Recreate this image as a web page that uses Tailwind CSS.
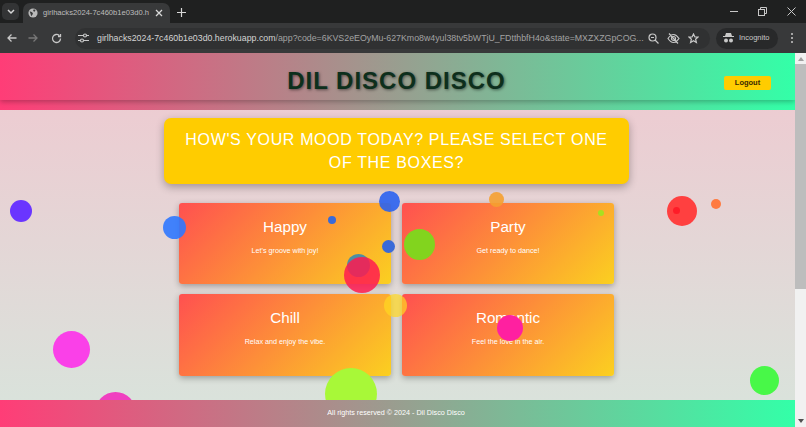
<!DOCTYPE html>
<html lang="en">
<head>
  <meta charset="UTF-8" />
  <title>Dil Disco Disco</title>
  <script src="https://cdn.jsdelivr.net/npm/@tailwindcss/browser@4"></script>
</head>
<body class="w-[806px] h-[427px] overflow-hidden font-['Liberation_Sans',Arial,sans-serif] bg-[#1f2020]">
  <!-- browser chrome -->
  <div class="h-[23px] flex items-end bg-[#1f2020] text-[#c7c7c7]">
    <div class="w-[17px] h-[17px] ml-[2px] mb-[3px] rounded-[5px] bg-[#333435] flex items-center justify-center">
      <svg width="8" height="6" viewBox="0 0 8 6" fill="none" stroke="#d5d5d5" stroke-width="1.5"><path d="M1 1l3 3 3-3"/></svg>
    </div>
    <div class="w-[147px] h-[20px] ml-[4px] rounded-t-[7px] bg-[#38393a] flex items-center pl-[5px] pr-[7px] gap-[5px]">
      <svg width="10" height="10" viewBox="0 0 12 12" fill="#b9b9b9"><circle cx="6" cy="6" r="5.5"/><path d="M2 4l3 1 1 2-2 3zM7 1.500l2 1-1 2-2-1z" fill="#38393a"/></svg>
      <span class="text-[7.600px] leading-none text-[#bdbdbd] whitespace-nowrap flex-1">girlhacks2024-7c460b1e03d0.h</span>
      <svg width="8" height="8" viewBox="0 0 8 8" stroke="#d8d8d8" stroke-width="1.3"><path d="M1 1l6 6M7 1l-6 6"/></svg>
    </div>
    <svg class="ml-[7px] mb-[6px]" width="9" height="9" viewBox="0 0 9 9" stroke="#d8d8d8" stroke-width="1.2"><path d="M4.500 0v9M0 4.500h9"/></svg>
    <div class="ml-auto flex items-center mb-[7px] mr-[10.500px] gap-[20px]">
      <div class="w-[8px] h-[1px] bg-[#c8c8c8]"></div>
      <svg width="9" height="9" viewBox="0 0 9 9" fill="none" stroke="#c8c8c8"><rect x="0.5" y="2.5" width="6" height="6"/><path d="M2.500 2.500V.5h6v6H6.500"/></svg>
      <svg width="9" height="9" viewBox="0 0 9 9" stroke="#c8c8c8"><path d="M.5.500l8 8M8.500.500l-8 8"/></svg>
    </div>
  </div>
  <div class="h-[30px] flex items-center bg-[#38393a]">
    <svg class="ml-[7px]" width="10" height="10" viewBox="0 0 10 10" fill="none" stroke="#c8c8c8" stroke-width="1.3"><path d="M9.500 5H1M4.500 1.500L1 5l3.500 3.500"/></svg>
    <svg class="ml-[11px]" width="10" height="10" viewBox="0 0 10 10" fill="none" stroke="#777" stroke-width="1.3"><path d="M.5 5H9M5.500 1.500L9 5 5.500 8.500"/></svg>
    <svg class="ml-[13px]" width="11" height="11" viewBox="0 0 11 11" fill="none" stroke="#c8c8c8" stroke-width="1.3"><path d="M9.500 5.500a4 4 0 1 1-1.200-2.900M9.500 1v2.500H7"/></svg>
    <div class="ml-[13px] w-[635px] h-[21px] rounded-full bg-[#303132] flex items-center pl-[3px]">
      <svg width="11" height="10" viewBox="0 0 11 10" fill="none" stroke="#c8c8c8" stroke-width="1.200"><path d="M0 2.500h5M9 2.500h2M0 7.500h2M6 7.500h5"/><circle cx="7" cy="2.500" r="1.500"/><circle cx="4" cy="7.500" r="1.500"/></svg>
      <span class="ml-[8px] w-[539px] text-[8.800px] leading-[12px] text-[#d4d4d4] whitespace-nowrap">girlhacks2024-7c460b1e03d0.herokuapp.com<span class="text-[#a3a3a3]">/app?code=6KVS2eEOyMu-627Kmo8w4yul38tv5bWTjU_FDtthbfH4o&amp;state=MXZXZGpCOG...</span></span>
      <svg class="ml-[12px]" width="11" height="11" viewBox="0 0 11 11" fill="none" stroke="#c8c8c8" stroke-width="1.200"><circle cx="4.500" cy="4.500" r="3.500"/><path d="M7 7l3.500 3.500M3 4.500h3"/></svg>
      <svg class="ml-[8px]" width="13" height="11" viewBox="0 0 13 11" fill="none" stroke="#c8c8c8" stroke-width="1.200"><path d="M1 5.500C3 2.500 5 1.500 6.500 1.500s3.500 1 5.500 4c-2 3-4 4-5.500 4S3 8.500 1 5.500zM2 .5l9 10"/><circle cx="6.500" cy="5.500" r="2"/></svg>
      <svg class="ml-[8px]" width="11" height="11" viewBox="0 0 11 11" fill="none" stroke="#c8c8c8" stroke-width="1.200"><path d="M5.500 1l1.400 3h3.100L7.600 6.200l.8 3.300-2.900-1.800-2.900 1.800.8-3.300L1 4h3.100z"/></svg>
    </div>
    <div class="ml-[6px] w-[62px] h-[21px] rounded-full bg-[#28292a] flex items-center pl-[7px] gap-[5px]">
      <svg width="11" height="10" viewBox="0 0 11 10" fill="#c8c8c8"><path d="M3 0h5l1 3h2v1H0V3h2z"/><circle cx="3" cy="7.500" r="2"/><circle cx="8" cy="7.500" r="2"/></svg>
      <span class="text-[7.500px] leading-none text-[#c9c9c9]">Incognito</span>
    </div>
    <div class="ml-[13px] flex flex-col gap-[2px]">
      <div class="w-[2px] h-[2px] rounded-full bg-[#c8c8c8]"></div>
      <div class="w-[2px] h-[2px] rounded-full bg-[#c8c8c8]"></div>
      <div class="w-[2px] h-[2px] rounded-full bg-[#c8c8c8]"></div>
    </div>
  </div>

  <!-- page -->
  <div class="h-[374px] flex">
    <div class="relative w-[795px] h-full overflow-hidden flex flex-col bg-[linear-gradient(180deg,#f0c8d0,#d8e4dc)]">
      <header class="relative h-[57px] shrink-0 bg-[linear-gradient(90deg,#ff3d77,#33ffa8)]">
        <div class="h-[47px] flex items-center justify-center pt-[9px] pr-[2px] shadow-[0_2px_5px_rgba(0,0,0,0.25)]">
          <h1 class="text-[24px] leading-none font-bold tracking-[1px] text-[#0d2f1c] [text-shadow:1px_1px_3px_rgba(0,0,0,0.5)]">DIL DISCO DISCO</h1>
        </div>
        <button class="absolute right-[24px] top-[23px] w-[47px] h-[14px] rounded-[2px] bg-[#ffcc00] text-[7.500px] font-bold text-[#3a2a00]">Logout</button>
      </header>

      <main class="flex-1 flex flex-col items-center pt-[8px] pr-[2px]">
        <div class="w-[465px] h-[66px] rounded-[7px] bg-[#ffcc00] shadow-[0_3px_8px_rgba(0,0,0,0.3)] flex items-center justify-center text-center text-white text-[16px] leading-[23px] tracking-[0.65px]">
          <p class="whitespace-nowrap">HOW'S YOUR MOOD TODAY? PLEASE SELECT ONE<br />OF THE BOXES?</p>
        </div>
        <div class="grid grid-cols-2 gap-x-[11px] gap-y-[10px] mt-[18.700px]">
          <div class="w-[212px] h-[81.500px] rounded-[3px] bg-[linear-gradient(135deg,#ff5050,#fbd020)] shadow-[0_2px_6px_rgba(0,0,0,0.3)] text-white text-center pt-[14px]">
            <h2 class="text-[15.200px] leading-[20px]">Happy</h2>
            <p class="text-[7.200px] mt-[9px]">Let's groove with joy!</p>
          </div>
          <div class="w-[212px] h-[81.500px] rounded-[3px] bg-[linear-gradient(135deg,#ff5050,#fbd020)] shadow-[0_2px_6px_rgba(0,0,0,0.3)] text-white text-center pt-[14px]">
            <h2 class="text-[15.200px] leading-[20px]">Party</h2>
            <p class="text-[7.200px] mt-[9px]">Get ready to dance!</p>
          </div>
          <div class="w-[212px] h-[81.500px] rounded-[3px] bg-[linear-gradient(135deg,#ff5050,#fbd020)] shadow-[0_2px_6px_rgba(0,0,0,0.3)] text-white text-center pt-[14px]">
            <h2 class="text-[15.200px] leading-[20px]">Chill</h2>
            <p class="text-[7.200px] mt-[9px]">Relax and enjoy the vibe.</p>
          </div>
          <div class="w-[212px] h-[81.500px] rounded-[3px] bg-[linear-gradient(135deg,#ff5050,#fbd020)] shadow-[0_2px_6px_rgba(0,0,0,0.3)] text-white text-center pt-[14px]">
            <h2 class="text-[15.200px] leading-[20px]">Romantic</h2>
            <p class="text-[7.200px] mt-[9px]">Feel the love in the air.</p>
          </div>
        </div>
      </main>

      <footer class="h-[27px] shrink-0 flex items-center justify-center pr-[3px] bg-[linear-gradient(90deg,#ff3d77,#33ffa8)] text-white text-[7.200px] z-10">All rights reserved © 2024 - Dil Disco Disco</footer>

      <!-- floating balls, y is relative to page top (53) -->
      <div class="absolute left-[10px] top-[147px] w-[22px] h-[22px] rounded-full bg-[#6a35ff]"></div>
      <div class="absolute left-[163px] top-[163px] w-[23px] h-[23px] rounded-full bg-[#2f78ff]/90"></div>
      <div class="absolute left-[379px] top-[138px] w-[21px] h-[21px] rounded-full bg-[#2a62f0]/90"></div>
      <div class="absolute left-[328px] top-[163px] w-[8px] h-[8px] rounded-full bg-[#3a6ad8]"></div>
      <div class="absolute left-[382px] top-[187px] w-[13px] h-[13px] rounded-full bg-[#3a6ad8]"></div>
      <div class="absolute left-[347px] top-[201px] w-[23px] h-[23px] rounded-full bg-[#3a8ab0]/90"></div>
      <div class="absolute left-[344px] top-[204px] w-[36px] h-[36px] rounded-full bg-[#ff1a50]/85"></div>
      <div class="absolute left-[404px] top-[176px] w-[31px] h-[31px] rounded-full bg-[#82d41e]"></div>
      <div class="absolute left-[489px] top-[139px] w-[15px] h-[15px] rounded-full bg-[#f5a030]/90"></div>
      <div class="absolute left-[598px] top-[157px] w-[6px] h-[6px] rounded-full bg-[#a8e020]"></div>
      <div class="absolute left-[667px] top-[143px] w-[30px] h-[30px] rounded-full bg-[#ff4040]"></div>
      <div class="absolute left-[673px] top-[154px] w-[7px] h-[7px] rounded-full bg-[#ff1c28]"></div>
      <div class="absolute left-[711px] top-[146px] w-[10px] h-[10px] rounded-full bg-[#ff7a40]"></div>
      <div class="absolute left-[384px] top-[241px] w-[23px] h-[23px] rounded-full bg-[#ffd820]/70"></div>
      <div class="absolute left-[497px] top-[262px] w-[26px] h-[26px] rounded-full bg-[#ff20a0]"></div>
      <div class="absolute left-[53px] top-[278px] w-[37px] h-[37px] rounded-full bg-[#fa40e8]"></div>
      <div class="absolute left-[95px] top-[339px] w-[41px] h-[41px] rounded-full bg-[#f040c0]"></div>
      <div class="absolute left-[325px] top-[315px] w-[52px] h-[52px] rounded-full bg-[#a8f838]"></div>
      <div class="absolute left-[750px] top-[313px] w-[29px] h-[29px] rounded-full bg-[#48f848]"></div>
    </div>

    <!-- scrollbar -->
    <div class="w-[11px] h-full bg-[#f1f1f1] flex flex-col items-center">
      <svg class="mt-[4px] shrink-0" width="6" height="4" viewBox="0 0 6 4" fill="#a0a0a0"><path d="M3 0l3 4H0z"/></svg>
      <div class="w-full h-[225px] mt-[3px] bg-[#bdbdbd]"></div>
      <svg class="mt-auto mb-[4px] shrink-0" width="6" height="4" viewBox="0 0 6 4" fill="#505050"><path d="M0 0h6L3 4z"/></svg>
    </div>
  </div>
</body>
</html>
